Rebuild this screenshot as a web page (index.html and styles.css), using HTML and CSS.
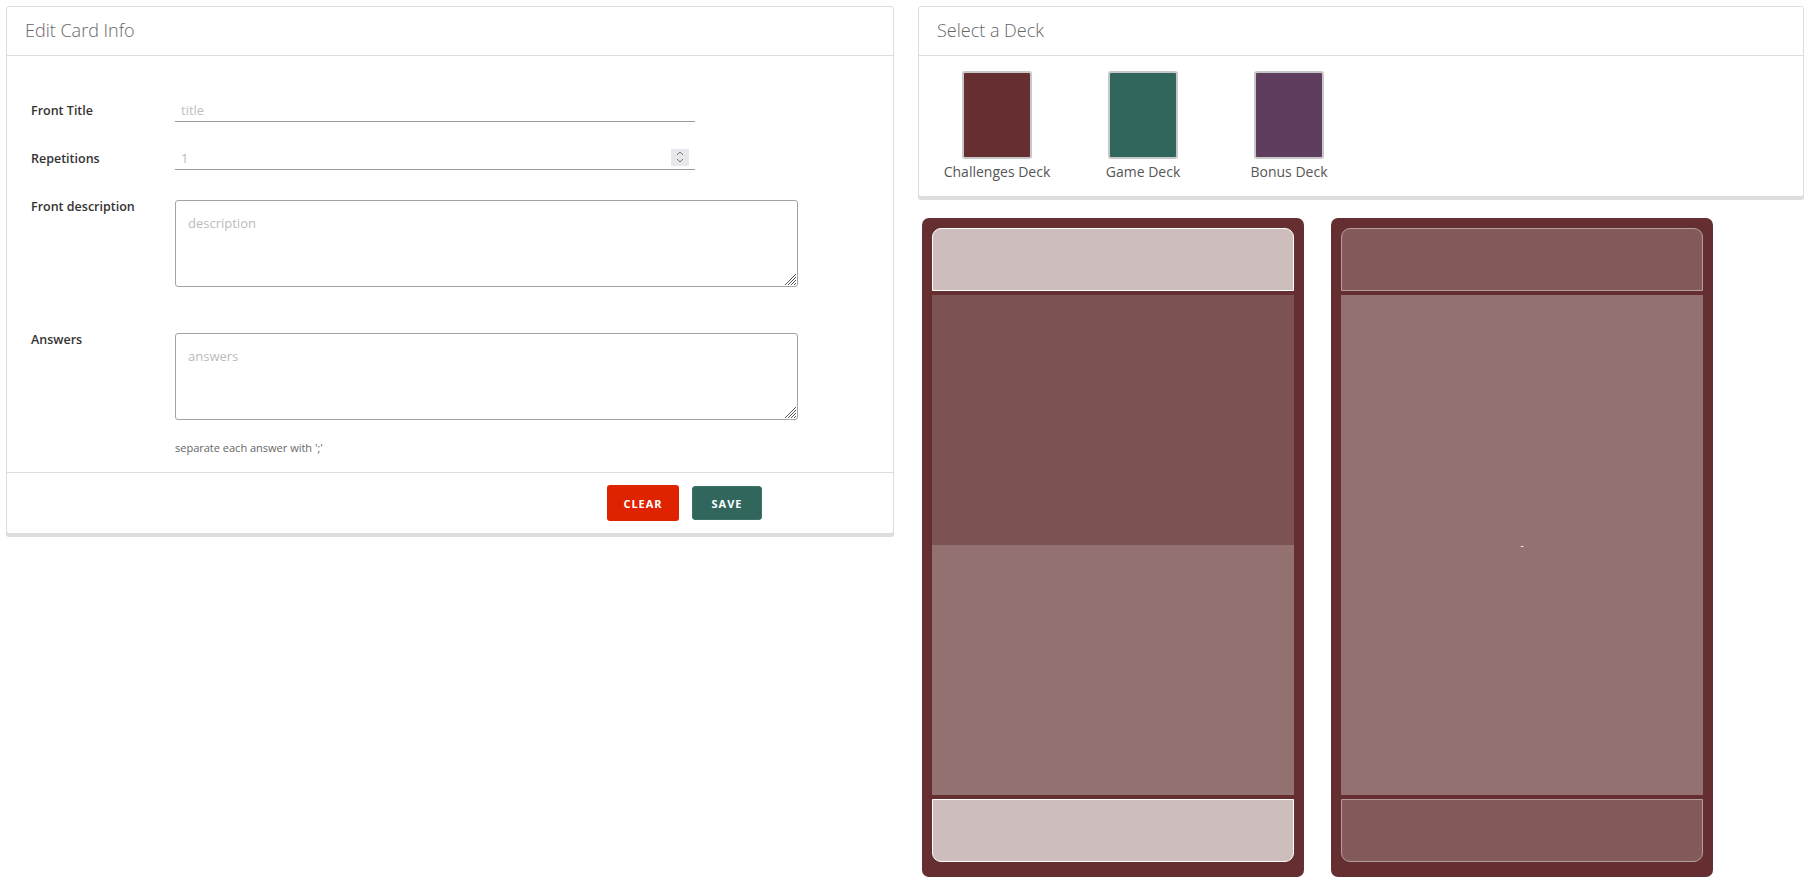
FILE: index.html
```html
<!DOCTYPE html>
<html lang="en">
<head>
<meta charset="utf-8">
<title>Edit Card</title>
<link rel="stylesheet" href="styles.css">
</head>
<body>
<div class="layout">
  <section class="panel edit-panel">
    <header class="panel-header">Edit Card Info</header>
    <div class="panel-block form">
      <div class="row row-first">
        <label class="lbl">Front Title</label>
        <div class="field"><input class="line-input" type="text" placeholder="title"></div>
      </div>
      <div class="row row-second">
        <label class="lbl">Repetitions</label>
        <div class="field">
          <div class="line-input num"><span class="num-val">1</span>
            <span class="spin"><svg width="10" height="14" viewBox="0 0 10 14"><path d="M2 5 L5 2 L8 5" fill="none" stroke="#777" stroke-width="1"/><path d="M2 9 L5 12 L8 9" fill="none" stroke="#777" stroke-width="1"/></svg></span>
          </div>
        </div>
      </div>
      <div class="row row-area">
        <label class="lbl lbl-top">Front description</label>
        <div class="field"><div class="area"><span class="ph">description</span>
          <svg class="grip" width="14" height="14" viewBox="0 0 14 14"><path d="M13 2 L2 13 M13 5 L5 13 M13 8 L8 13 M13 11 L11 13" stroke="#555" stroke-width="1" fill="none"/></svg>
        </div></div>
      </div>
      <div class="row row-area2">
        <label class="lbl lbl-top">Answers</label>
        <div class="field"><div class="area"><span class="ph">answers</span>
          <svg class="grip" width="14" height="14" viewBox="0 0 14 14"><path d="M13 2 L2 13 M13 5 L5 13 M13 8 L8 13 M13 11 L11 13" stroke="#555" stroke-width="1" fill="none"/></svg>
        </div></div>
      </div>
      <p class="hint">separate each answer with ';'</p>
    </div>
    <footer class="panel-footer">
      <button class="btn btn-danger">CLEAR</button>
      <button class="btn btn-save">SAVE</button>
    </footer>
  </section>

  <div class="right-col">
    <section class="panel deck-panel">
      <header class="panel-header">Select a Deck</header>
      <div class="panel-block decks">
        <div class="deck"><div class="swatch sw-red"></div><span class="deck-name">Challenges Deck</span></div>
        <div class="deck"><div class="swatch sw-green"></div><span class="deck-name">Game Deck</span></div>
        <div class="deck"><div class="swatch sw-purple"></div><span class="deck-name">Bonus Deck</span></div>
      </div>
    </section>

    <div class="cards">
      <div class="game-card front">
        <div class="gc-head"></div>
        <div class="gc-body">
          <div class="gc-dark"></div>
          <div class="gc-light"></div>
        </div>
        <div class="gc-foot"></div>
      </div>
      <div class="game-card back">
        <div class="gc-head"></div>
        <div class="gc-body single"><span class="dash">-</span></div>
        <div class="gc-foot"></div>
      </div>
    </div>
  </div>
</div>
</body>
</html>
```
FILE: styles.css
```css
* { box-sizing: border-box; }
html, body { margin: 0; padding: 0; background: #fff; }
body {
  font-family: "Open Sans", "Liberation Sans", sans-serif;
  color: #565656;
  padding: 6px;
}
.layout {
  display: grid;
  grid-template-columns: 888px 886px;
  column-gap: 24px;
  align-items: start;
}
.panel {
  border: 1px solid #ddd;
  border-radius: 3px;
  box-shadow: 0 3px 0 0 #ddd;
  background: #fff;
}
.panel-header {
  height: 49px;
  line-height: 46px;
  padding-left: 18px;
  font-size: 18px;
  font-weight: 300;
  color: #666;
  border-bottom: 1px solid #ddd;
}
.form {
  padding: 42px 24px 17px 24px;
}
.row { display: flex; align-items: flex-start; }
.lbl {
  width: 144px;
  height: 24px;
  flex: none;
  font-size: 12.5px;
  font-weight: 600;
  color: #333;
  line-height: 23px;
  padding-top: 1px;
}
.lbl-top { line-height: 14px; height: auto; padding-top: 0; }
.row-second { margin-top: 24px; }
.row-area { margin-top: 30px; }
.row-area2 { margin-top: 46px; }
.line-input {
  display: block;
  width: 520px;
  height: 24px;
  border: 0;
  border-bottom: 1px solid #9a9a9a;
  padding: 0 6px;
  font-family: inherit;
  font-size: 13px;
  color: #bbb;
  outline: none;
  background: transparent;
}
.line-input::placeholder { color: #c0c0c0; }
.num {
  display: flex;
  align-items: center;
  justify-content: space-between;
  padding-right: 6px;
}
.num-val { color: #bbb; font-size: 13px; }
.spin {
  width: 18px;
  height: 17px;
  background: #e8e8ec;
  display: flex;
  align-items: center;
  justify-content: center;
  margin-top: -1px;
}
.area {
  position: relative;
  width: 623px;
  height: 87px;
  border: 1px solid #a3a3a3;
  border-radius: 3px;
  padding: 10px 12px;
}
.ph { font-size: 13px; color: #bbb; line-height: 16px; }
.grip {
  position: absolute;
  right: 0;
  bottom: 0;
  display: block;
}
.hint {
  margin: 21px 0 0 144px;
  font-size: 11px;
  line-height: 14px;
  color: #666;
}
.panel-footer {
  border-top: 1px solid #ddd;
  height: 61px;
  display: flex;
  justify-content: flex-end;
  align-items: flex-start;
  padding: 12px 131px 0 0;
  gap: 13px;
}
.btn {
  height: 36px;
  border-radius: 3px;
  border: 0;
  color: #fff;
  font-family: inherit;
  font-size: 11px;
  font-weight: 700;
  letter-spacing: 1px;
  padding: 0;
  cursor: pointer;
}
.btn-danger { width: 72px; background: #df2300; }
.btn-save { width: 70px; height: 34px; margin-top: 1px; background: #30665c; border: 1px solid #3e7368; }

.decks {
  display: flex;
  gap: 26px;
  padding: 15px 0 16px 18px;
}
.deck {
  width: 120px;
  display: flex;
  flex-direction: column;
  align-items: center;
}
.swatch {
  width: 70px;
  height: 88px;
  border: 2px solid #c8c8c8;
  border-radius: 3px;
}
.sw-red { background: #652e30; }
.sw-green { background: #30665c; }
.sw-purple { background: #5f3d5f; }
.deck-name {
  margin-top: 5px;
  font-size: 14px;
  line-height: 16px;
  color: #565656;
  white-space: nowrap;
}

.cards {
  display: flex;
  gap: 27px;
  margin: 21px 0 0 4px;
}
.game-card {
  width: 382px;
  height: 659px;
  background: #652e30;
  border-radius: 7px;
  padding: 10px 10px 15px 10px;
  display: flex;
  flex-direction: column;
  gap: 4px;
}
.gc-head, .gc-foot {
  height: 63px;
  flex: none;
}
.gc-head { border-radius: 9px 9px 0 0; }
.gc-foot { border-radius: 0 0 9px 9px; }
.front .gc-head, .front .gc-foot { background: #cdbdbd; border: 1px solid #fff; }
.back .gc-head, .back .gc-foot { background: #835a5a; border: 1px solid #b59d9d; }
.gc-body {
  flex: 1;
  display: flex;
  flex-direction: column;
}
.gc-dark { flex: 1; background: #7d5253; }
.gc-light { flex: 1; background: #927170; }
.gc-body.single {
  background: #927170;
  align-items: center;
  justify-content: center;
}
.dash { color: #fff; font-size: 10px; line-height: 10px; }
```
